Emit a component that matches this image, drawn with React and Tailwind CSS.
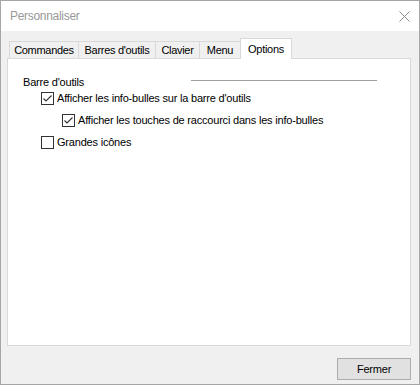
import React from 'react';

const Check = ({ checked }) => (
  <span className="w-[13px] h-[13px] border border-[#333333] bg-white flex items-center justify-center shrink-0">
    {checked && (
      <svg width="11" height="11" viewBox="0 0 11 11">
        <path d="M1.5 5.5 L4 8 L9.5 2.5" fill="none" stroke="#333333" strokeWidth="1.1" />
      </svg>
    )}
  </span>
);

const Option = ({ checked, label, indent }) => (
  <div className={`flex items-center h-[13px] ${indent}`}>
    <Check checked={checked} />
    <span className="ml-[3px] leading-[13px] whitespace-nowrap">{label}</span>
  </div>
);

const tabs = [
  { name: 'Commandes', w: 'w-[69px]' },
  { name: "Barres d'outils", w: 'w-[77px]' },
  { name: 'Clavier', w: 'w-[44px]' },
  { name: 'Menu', w: 'w-[41px]' },
];

export default function App() {
  return (
    <div
      className="w-[420px] h-[385px] border border-[#a6a6a6] bg-[#f0f0f0] flex flex-col text-[11px] tracking-[-0.2px] text-black"
      style={{ fontFamily: '"Liberation Sans", Arial, sans-serif' }}
    >
      {/* Title bar */}
      <div className="h-[30px] bg-white flex items-center justify-between pl-[9px] pr-[9px] shrink-0">
        <span className="text-[12px] tracking-[-0.3px] text-[#999999]">Personnaliser</span>
        <svg width="11" height="11" viewBox="0 0 11 11">
          <path d="M0.5 0.5 L10.5 10.5 M10.5 0.5 L0.5 10.5" stroke="#8a8a8a" strokeWidth="1" />
        </svg>
      </div>

      {/* Body */}
      <div className="flex flex-col pl-[6px] pt-[7px]">
        <div className="flex items-end h-[20px] pl-[2px] tracking-[-0.3px]">
          {tabs.map((t) => (
            <div
              key={t.name}
              className={`${t.w} h-[17px] border-l border-t border-[#d9d9d9] flex items-center justify-center whitespace-nowrap`}
            >
              {t.name}
            </div>
          ))}
          <div className="w-[52px] h-[21px] -mb-[1px] border-l border-t border-r border-[#d9d9d9] bg-white relative z-10 flex items-start justify-center pt-[2px] whitespace-nowrap">
            Options
          </div>
        </div>

        <div className="w-[404px] h-[288px] bg-white border border-[#d9d9d9] flex flex-col pt-[17px] pl-[15px]">
          <div className="flex items-start h-[13px] leading-[13px]">
            <span className="w-[168px] whitespace-nowrap">Barre d'outils</span>
            <div className="w-[186px] h-px bg-[#a0a0a0] mt-[4px]" />
          </div>
          <div className="flex flex-col gap-[9px] mt-[3px]">
            <Option checked label="Afficher les info-bulles sur la barre d'outils" indent="ml-[18px]" />
            <Option checked label="Afficher les touches de raccourci dans les info-bulles" indent="ml-[39px]" />
            <Option label="Grandes icônes" indent="ml-[18px]" />
          </div>
        </div>

        <div className="flex justify-end w-[404px] mt-[12px]">
          <button className="w-[74px] h-[22px] border border-[#adadad] bg-[#e1e1e1] flex items-center justify-center">
            Fermer
          </button>
        </div>
      </div>
    </div>
  );
}
